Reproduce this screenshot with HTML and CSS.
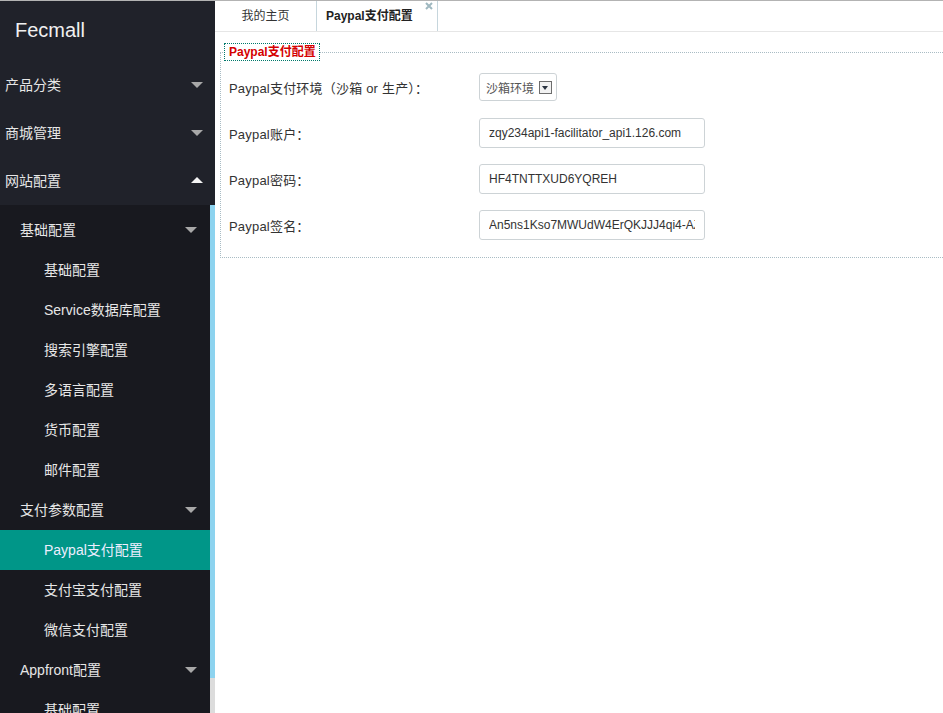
FILE: index.html
```html
<!DOCTYPE html>
<html lang="zh-CN">
<head>
    <meta charset="UTF-8">
    <title>Fecmall - Paypal支付配置</title>
    <link rel="stylesheet" href="styles.css">
</head>
<body>
    <div class="layout">
        <aside class="sidebar">
            <div class="sidebar-top">
                <div class="logo">Fecmall</div>
                <div class="menu-item">产品分类<span class="arrow down"></span></div>
                <div class="menu-item">商城管理<span class="arrow down"></span></div>
                <div class="menu-item">网站配置<span class="arrow up"></span></div>
            </div>
            <div class="sidebar-scroll">
                <ul class="submenu">
                    <li class="sub-group">基础配置<span class="arrow down"></span></li>
                    <li class="sub-item">基础配置</li>
                    <li class="sub-item">Service数据库配置</li>
                    <li class="sub-item">搜索引擎配置</li>
                    <li class="sub-item">多语言配置</li>
                    <li class="sub-item">货币配置</li>
                    <li class="sub-item">邮件配置</li>
                    <li class="sub-group">支付参数配置<span class="arrow down"></span></li>
                    <li class="sub-item active">Paypal支付配置</li>
                    <li class="sub-item">支付宝支付配置</li>
                    <li class="sub-item">微信支付配置</li>
                    <li class="sub-group">Appfront配置<span class="arrow down"></span></li>
                    <li class="sub-item">基础配置</li>
                </ul>
                <div class="scrollbar"><div class="thumb"></div></div>
            </div>
        </aside>

        <main class="main">
            <div class="tabs">
                <div class="tab">我的主页</div>
                <div class="tab current">Paypal支付配置
                    <span class="tab-close">
                        <svg width="8" height="8" viewBox="0 0 8 8"><path d="M1 1L7 7M7 1L1 7" stroke="#9fb8c0" stroke-width="2"/></svg>
                    </span>
                </div>
            </div>

            <fieldset class="panel">
                <legend>Paypal支付配置</legend>
                <div class="form-row">
                    <label>Paypal支付环境（沙箱 or 生产）：</label>
                    <div class="select">沙箱环境<span class="select-btn"></span></div>
                </div>
                <div class="form-row">
                    <label>Paypal账户：</label>
                    <input type="text" value="zqy234api1-facilitator_api1.126.com">
                </div>
                <div class="form-row">
                    <label>Paypal密码：</label>
                    <input type="text" value="HF4TNTTXUD6YQREH">
                </div>
                <div class="form-row">
                    <label>Paypal签名：</label>
                    <input type="text" value="An5ns1Kso7MWUdW4ErQKJJJ4qi4-AZ8ZVbN3N8AbCdE">
                </div>
            </fieldset>
        </main>
    </div>
</body>
</html>
```

FILE: styles.css
```css
html, body {
    margin: 0;
    padding: 0;
}
body {
    font-family: 'Liberation Sans', 'Noto Sans CJK SC', sans-serif;
    border-top: 1px solid #b3b3b3;
    height: 712px;
    overflow: hidden;
    background: #fff;
}
.layout {
    display: flex;
    height: 712px;
}
.sidebar {
    width: 215px;
    flex-shrink: 0;
    display: flex;
    flex-direction: column;
    background: #18191f;
    color: #e6e6e6;
}
.sidebar-top {
    background: #20222a;
}
.logo {
    height: 60px;
    line-height: 58px;
    padding-left: 15px;
    font-size: 20px;
    color: #f0f0f0;
}
.menu-item {
    position: relative;
    height: 48px;
    line-height: 48px;
    padding-left: 5px;
    font-size: 14px;
}
.arrow {
    position: absolute;
    top: 50%;
    width: 0;
    height: 0;
    border-left: 6px solid transparent;
    border-right: 6px solid transparent;
}
.menu-item .arrow {
    right: 12px;
}
.arrow.down {
    margin-top: -3px;
    border-top: 6px solid #a8a8a8;
}
.arrow.up {
    margin-top: -4px;
    border-bottom: 6px solid #f4f4f4;
}
.sidebar-scroll {
    flex: 1;
    display: flex;
    overflow: hidden;
}
.submenu {
    list-style: none;
    margin: 0;
    padding: 5px 0 0;
    width: 210px;
    font-size: 14px;
}
.submenu li {
    position: relative;
    height: 40px;
    line-height: 40px;
}
.sub-group {
    padding-left: 20px;
}
.sub-group .arrow {
    right: 13px;
}
.sub-item {
    padding-left: 44px;
}
.sub-item.active {
    background: #009688;
    color: #eef;
}
.scrollbar {
    width: 5px;
    background: #dcdcdc;
}
.thumb {
    height: 473px;
    background: #8dd3ef;
}

.main {
    flex: 1;
    overflow: hidden;
}
.tabs {
    display: flex;
    height: 31px;
    box-sizing: border-box;
    border-bottom: 1px solid #e6e6e6;
}
.tab {
    position: relative;
    box-sizing: border-box;
    height: 30px;
    line-height: 31px;
    font-size: 12px;
    color: #333;
    border-right: 1px solid #c6d6dd;
}
.tab:first-child {
    width: 102px;
    text-align: center;
}
.tab.current {
    width: 121px;
    padding-left: 9px;
    font-weight: bold;
    color: #222;
}
.tab-close {
    position: absolute;
    top: 1px;
    right: 4px;
    line-height: 8px;
}

.panel {
    margin: 11px -30px 0 5px;
    padding: 11px 3px 17px;
    border: 1px dotted #a9bcc4;
}
.panel legend {
    margin-left: 0;
    padding: 0 3px 0 4px;
    font-size: 12px;
    font-weight: bold;
    color: #d40000;
    line-height: 16px;
    border: 1px dotted #00796b;
}
.form-row {
    display: flex;
    align-items: center;
    height: 30px;
    margin-bottom: 16px;
    padding-left: 5px;
}
.form-row:last-child {
    margin-bottom: 0;
}
.form-row label {
    width: 250px;
    font-size: 13px;
    letter-spacing: 0.2px;
    color: #333;
}
.form-row input {
    width: 226px;
    height: 30px;
    box-sizing: border-box;
    padding: 0 9px;
    border: 1px solid #cdd3d6;
    border-radius: 3px;
    font-family: 'Liberation Sans', 'Noto Sans CJK SC', sans-serif;
    font-size: 12px;
    color: #333;
    outline: none;
}
.select {
    display: flex;
    align-items: center;
    width: 78px;
    height: 28px;
    box-sizing: border-box;
    padding-left: 6px;
    border: 1px solid #cdd3d6;
    border-radius: 3px;
    font-size: 12px;
    color: #555;
}
.select-btn {
    position: relative;
    margin-left: 5px;
    width: 13px;
    height: 13px;
    box-sizing: border-box;
    border: 1px solid #6d6d6d;
    background: #f2f2f2;
}
.select-btn::after {
    content: '';
    position: absolute;
    left: 2px;
    top: 4px;
    border-left: 3.5px solid transparent;
    border-right: 3.5px solid transparent;
    border-top: 4px solid #2a3340;
}
```
